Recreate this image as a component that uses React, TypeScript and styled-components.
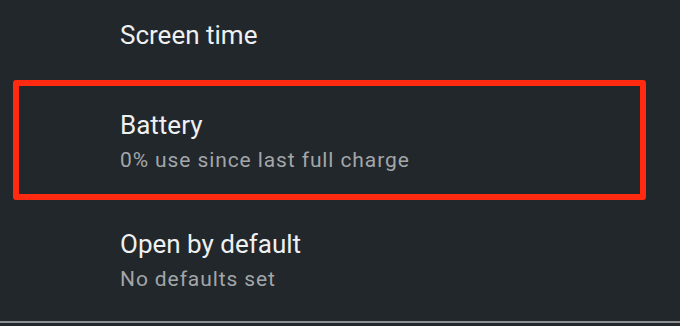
import React from 'react';
import styled, { createGlobalStyle } from 'styled-components';

const GlobalStyle = createGlobalStyle`
  html, body {
    margin: 0;
    padding: 0;
    background: #22272b;
  }
  body {
    font-family: Roboto, "Noto Sans", sans-serif;
    -webkit-font-smoothing: antialiased;
  }
`;

const Screen = styled.div`
  width: 680px;
  height: 326px;
  background: #22272b;
  display: flex;
  flex-direction: column;
  overflow: hidden;
`;

const Item = styled.div<{ $top: number; $bottom: number }>`
  display: flex;
  flex-direction: column;
  padding: ${p => p.$top}px 0 ${p => p.$bottom}px 120px;
`;

const Highlight = styled.div`
  display: flex;
  flex-direction: column;
  margin-left: 13px;
  width: 633px;
  box-sizing: border-box;
  border: 6px solid #ff2a10;
  border-radius: 3px;
  padding: 23px 0 20px 101px;
`;

const Title = styled.div`
  font-size: 26px;
  line-height: 32px;
  color: #eef0f1;
`;

const Summary = styled.div`
  margin-top: 5px;
  font-size: 21px;
  line-height: 28px;
  letter-spacing: 0.9px;
  color: #a2a6a9;
`;

const Divider = styled.div`
  height: 2px;
  margin-top: auto;
  margin-bottom: 3px;
  background: #8b8f92;
`;

export default function App() {
  return (
    <>
      <GlobalStyle />
      <Screen>
        <Item $top={19} $bottom={29}>
          <Title>Screen time</Title>
        </Item>
        <Highlight>
          <Title>Battery</Title>
          <Summary>0% use since last full charge</Summary>
        </Highlight>
        <Item $top={28} $bottom={0}>
          <Title>Open by default</Title>
          <Summary>No defaults set</Summary>
        </Item>
        <Divider />
      </Screen>
    </>
  );
}
